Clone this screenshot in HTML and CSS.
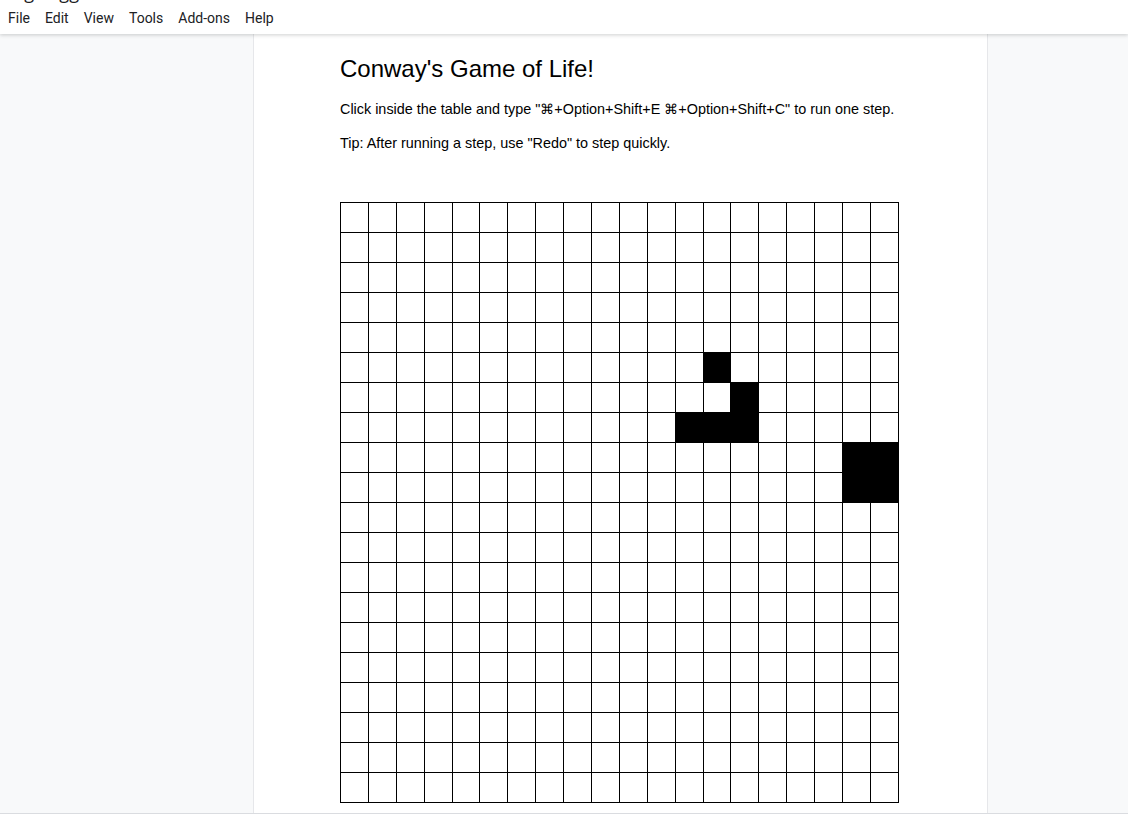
FILE: index.html
```html
<!DOCTYPE html>
<html>
<head>
<meta charset="utf-8">
<link rel="stylesheet" href="styles.css">
</head>
<body>
<div class="app">
  <header class="topbar">
    <div class="doctitle">Big Toggle</div>
    <nav class="menu">
      <span class="mi">File</span>
      <span class="mi">Edit</span>
      <span class="mi">View</span>
      <span class="mi">Tools</span>
      <span class="mi">Add-ons</span>
      <span class="mi">Help</span>
    </nav>
  </header>
  <main class="canvas">
    <div class="page">
      <h1 class="title">Conway's Game of Life!</h1>
      <p class="para">Click inside the table and type "⌘+Option+Shift+E ⌘+Option+Shift+C" to run one step.</p>
      <p class="para">Tip: After running a step, use "Redo" to step quickly.</p>
      <table class="grid" id="grid"></table>
    </div>
  </main>
  <div class="bottomline"></div>
</div>
<script>
  var alive = {"5,13":1,"6,14":1,"7,12":1,"7,13":1,"7,14":1,"8,18":1,"8,19":1,"9,18":1,"9,19":1};
  var t = document.getElementById('grid');
  var html = '';
  for (var r = 0; r < 20; r++) {
    html += '<tr>';
    for (var c = 0; c < 20; c++) {
      html += '<td class="' + (alive[r + ',' + c] ? 'cell on' : 'cell') + '"></td>';
    }
    html += '</tr>';
  }
  t.innerHTML = html;
</script>
</body>
</html>
```
FILE: styles.css
```css
html, body {
  margin: 0;
  padding: 0;
  height: 100%;
  overflow: hidden;
}
body {
  background: #f8f9fa;
  font-family: "Liberation Sans", Arial, sans-serif;
}
.app {
  display: flex;
  flex-direction: column;
  height: 814px;
}
.topbar {
  position: relative;
  z-index: 2;
  height: 34px;
  background: #ffffff;
  box-shadow: 0 1px 3px rgba(60, 64, 67, 0.15), 0 2px 4px rgba(60, 64, 67, 0.08);
  overflow: hidden;
  flex: none;
}
.doctitle {
  position: absolute;
  left: 8px;
  top: -19px;
  font-family: "Open Sans", Roboto, sans-serif;
  font-size: 18px;
  line-height: 22px;
  color: #202124;
}
.menu {
  display: flex;
  padding: 9px 0 0 0.5px;
  font-family: Roboto, "Noto Sans", sans-serif;
  font-size: 14px;
  line-height: 18px;
  color: #202124;
}
.mi {
  padding: 0 7.5px;
}
.canvas {
  flex: 1;
  display: flex;
  overflow: hidden;
  padding-left: 253px;
}
.page {
  width: 647px;
  background: #ffffff;
  border-left: 1px solid #e6e7ea;
  border-right: 1px solid #e6e7ea;
  padding: 19px 0 0 86px;
}
.title {
  margin: 0;
  font-weight: normal;
  font-size: 24px;
  line-height: 32px;
  color: #000;
}
.para {
  margin: 11px 0 0 0;
  font-size: 14.4px;
  line-height: 23px;
  color: #000;
}
.para:first-of-type {
  margin-top: 13px;
}
.grid {
  margin-top: 47px;
  border-collapse: collapse;
  width: 559px;
}
.cell {
  border: 1px solid #000;
  width: 27px;
  height: 29px;
  padding: 0;
}
.cell.on {
  background: #000;
}
.bottomline {
  height: 1px;
  background: #dadce0;
  flex: none;
}
```
